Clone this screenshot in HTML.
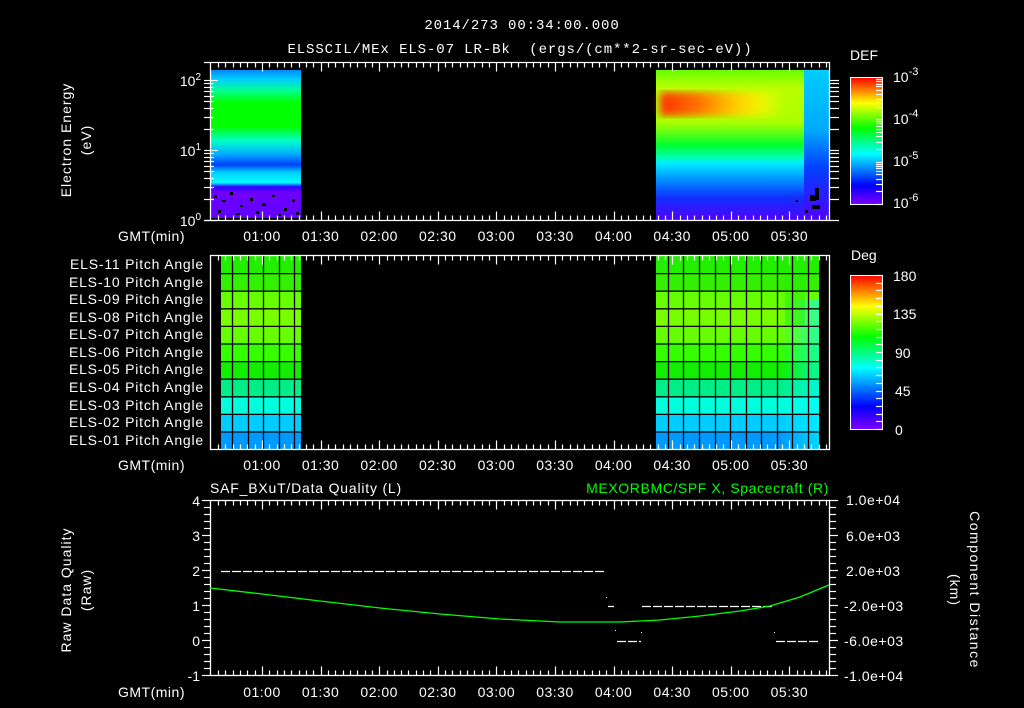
<!DOCTYPE html>
<html><head><meta charset="utf-8"><style>
html,body{margin:0;padding:0;background:#000;width:1024px;height:708px;overflow:hidden}
svg{display:block}
text{font-family:"Liberation Sans",sans-serif;fill:#fff;font-size:14px}
.mono{font-family:"Liberation Mono",monospace}
</style></head><body>
<svg width="1024" height="708" viewBox="0 0 1024 708" xmlns="http://www.w3.org/2000/svg">
<defs>
<linearGradient id="rb" x1="0" y1="1" x2="0" y2="0">
<stop offset="0" stop-color="#8000ff"/><stop offset="0.15" stop-color="#0000ff"/>
<stop offset="0.4" stop-color="#00ffff"/><stop offset="0.6" stop-color="#00ff00"/>
<stop offset="0.8" stop-color="#ffff00"/><stop offset="1" stop-color="#ff0000"/>
</linearGradient>
<linearGradient id="lb" x1="0" y1="0" x2="0" y2="1">
<stop offset="0" stop-color="#0088ff"/><stop offset="0.06" stop-color="#00ccff"/>
<stop offset="0.14" stop-color="#00ff90"/><stop offset="0.22" stop-color="#00ff00"/>
<stop offset="0.38" stop-color="#00ff00"/><stop offset="0.48" stop-color="#00ffcc"/>
<stop offset="0.57" stop-color="#00aaff"/><stop offset="0.64" stop-color="#0040ff"/>
<stop offset="0.69" stop-color="#00ccff"/><stop offset="0.76" stop-color="#00ffff"/>
<stop offset="0.79" stop-color="#3000ff"/><stop offset="0.83" stop-color="#7000ff"/>
<stop offset="1" stop-color="#6000ff"/>
</linearGradient>
<linearGradient id="rbk" x1="0" y1="0" x2="0" y2="1">
<stop offset="0" stop-color="#66ff00"/><stop offset="0.12" stop-color="#bbff00"/>
<stop offset="0.35" stop-color="#aaff00"/><stop offset="0.5" stop-color="#00ff30"/>
<stop offset="0.58" stop-color="#00ffaa"/><stop offset="0.62" stop-color="#00eeff"/>
<stop offset="0.72" stop-color="#0099ff"/><stop offset="0.85" stop-color="#1030ff"/>
<stop offset="1" stop-color="#5000ff"/>
</linearGradient>
<linearGradient id="rstrip" x1="0" y1="0" x2="0" y2="1">
<stop offset="0" stop-color="#00ccff"/><stop offset="0.4" stop-color="#00aaff"/>
<stop offset="0.65" stop-color="#0040ff"/><stop offset="1" stop-color="#5000ff"/>
</linearGradient>
<linearGradient id="band" x1="0" y1="0" x2="1" y2="0">
<stop offset="0" stop-color="#ff3000"/><stop offset="0.3" stop-color="#ff7000"/>
<stop offset="0.6" stop-color="#ffcc00"/><stop offset="0.8" stop-color="#ffee00" stop-opacity="0.8"/>
<stop offset="1" stop-color="#ffff00" stop-opacity="0"/>
</linearGradient>
<linearGradient id="fadeR" x1="0" y1="0" x2="1" y2="0">
<stop offset="0" stop-opacity="0" stop-color="#00ffff"/><stop offset="1" stop-color="#00ffff" stop-opacity="0.6"/>
</linearGradient>
<filter id="bl"><feGaussianBlur stdDeviation="4"/></filter>
</defs>

<text class="mono" x="522" y="29" text-anchor="middle" font-size="17" letter-spacing="0.9">2014/273 00:34:00.000</text>
<text class="mono" x="520" y="53" text-anchor="middle" font-size="17" letter-spacing="0.9" xml:space="preserve">ELSSCIL/MEx ELS-07 LR-Bk  (ergs/(cm**2-sr-sec-eV))</text>

<rect x="211" y="70" width="90" height="148" fill="url(#lb)"/>
<g fill="#000">
<rect x="214" y="195" width="3" height="3"/><rect x="222" y="200" width="4" height="2"/><rect x="230" y="192" width="3" height="3"/><rect x="240" y="205" width="3" height="2"/><rect x="250" y="198" width="3" height="3"/><rect x="262" y="203" width="4" height="3"/><rect x="272" y="195" width="3" height="2"/><rect x="284" y="208" width="3" height="3"/><rect x="292" y="199" width="3" height="3"/><rect x="218" y="210" width="3" height="3"/><rect x="236" y="213" width="4" height="2"/><rect x="256" y="211" width="3" height="3"/><rect x="278" y="214" width="3" height="2"/><rect x="296" y="212" width="3" height="3"/>
</g>
<rect x="656" y="70" width="150" height="150" fill="url(#rbk)"/>
<rect x="660" y="92" width="125" height="24" fill="url(#band)" filter="url(#bl)"/>
<rect x="804" y="70" width="25" height="150" fill="url(#rstrip)"/>
<g fill="#000"><rect x="810" y="195" width="6" height="6"/><rect x="815" y="188" width="4" height="12"/><rect x="812" y="205" width="8" height="4"/><rect x="805" y="210" width="3" height="3"/><rect x="796" y="200" width="2" height="2"/></g>

<g stroke="#fff" fill="none" stroke-width="1.3">
<path d="M204 62.5H829.5V220.5H204M210.5 62V221"/>
</g>

<text x="201" y="86" text-anchor="end" font-size="14">10<tspan font-size="10" dy="-6">2</tspan></text>
<text x="201" y="156" text-anchor="end" font-size="14">10<tspan font-size="10" dy="-6">1</tspan></text>
<text x="201" y="226" text-anchor="end" font-size="14">10<tspan font-size="10" dy="-6">0</tspan></text>
<text transform="translate(71,140) rotate(-90)" text-anchor="middle" font-size="17" letter-spacing="1">Electron Energy</text>
<text transform="translate(91,140) rotate(-90)" text-anchor="middle" font-size="17" letter-spacing="1">(eV)</text>

<text x="850" y="60" font-size="17">DEF</text>
<rect x="850.5" y="77.5" width="32" height="127" fill="url(#rb)" stroke="#fff"/>
<g font-size="17"><text x="893" y="82">10<tspan font-size="11" dy="-7">-3</tspan></text>
<text x="893" y="124">10<tspan font-size="11" dy="-7">-4</tspan></text>
<text x="893" y="166">10<tspan font-size="11" dy="-7">-5</tspan></text>
<text x="893" y="208">10<tspan font-size="11" dy="-7">-6</tspan></text></g>

<g id="mid">
<rect x="221" y="256" width="80" height="17.6" fill="#22ee00"/>
<rect x="221" y="273.6" width="80" height="17.6" fill="#33f000"/>
<rect x="221" y="291.2" width="80" height="17.6" fill="#66ff00"/>
<rect x="221" y="308.8" width="80" height="17.6" fill="#77ff00"/>
<rect x="221" y="326.4" width="80" height="17.6" fill="#66ff00"/>
<rect x="221" y="344" width="80" height="17.6" fill="#33ff00"/>
<rect x="221" y="361.6" width="80" height="17.6" fill="#11ee00"/>
<rect x="221" y="379.2" width="80" height="17.6" fill="#00ee88"/>
<rect x="221" y="396.8" width="80" height="17.6" fill="#00ffdd"/>
<rect x="221" y="414.4" width="80" height="17.6" fill="#00ccff"/>
<rect x="221" y="432" width="80" height="17.4" fill="#0099ff"/>
<rect x="656" y="256" width="163" height="17.6" fill="#22ee00"/>
<rect x="656" y="273.6" width="163" height="17.6" fill="#33f000"/>
<rect x="656" y="291.2" width="163" height="17.6" fill="#66ff00"/>
<rect x="656" y="308.8" width="163" height="17.6" fill="#77ff00"/>
<rect x="656" y="326.4" width="163" height="17.6" fill="#66ff00"/>
<rect x="656" y="344" width="163" height="17.6" fill="#33ff00"/>
<rect x="656" y="361.6" width="163" height="17.6" fill="#11ee00"/>
<rect x="656" y="379.2" width="163" height="17.6" fill="#00ee88"/>
<rect x="656" y="396.8" width="163" height="17.6" fill="#00ffdd"/>
<rect x="656" y="414.4" width="163" height="17.6" fill="#00ccff"/>
<rect x="656" y="432" width="163" height="17.4" fill="#0099ff"/>
<rect x="780" y="300" width="39" height="149" fill="url(#fadeR)"/>
<rect x="785" y="256" width="20" height="70" fill="#22ee00" opacity="0.5"/>
</g>
<g stroke="#000" stroke-width="1.3" fill="none">
<path d="M232.5 256V449M248.5 256V449M263.5 256V449M279.5 256V449M294.5 256V449"/>
<path d="M668.5 256V449M683.5 256V449M699.5 256V449M715.5 256V449M730.5 256V449M746.5 256V449M761.5 256V449M777.5 256V449M792.5 256V449M808.5 256V449"/>
<path d="M221 273.6H301M221 291.2H301M221 308.8H301M221 326.4H301M221 344H301M221 361.6H301M221 379.2H301M221 396.8H301M221 414.4H301M221 432H301"/>
<path d="M656 273.6H819M656 291.2H819M656 308.8H819M656 326.4H819M656 344H819M656 361.6H819M656 379.2H819M656 396.8H819M656 414.4H819M656 432H819"/>
</g>
<rect x="210.5" y="255.5" width="619" height="194" fill="none" stroke="#fff" stroke-width="1.3"/>
<g font-size="13" text-anchor="end" letter-spacing="0.8">
<text x="204" y="269">ELS-11 Pitch Angle</text><text x="204" y="287">ELS-10 Pitch Angle</text>
<text x="204" y="304">ELS-09 Pitch Angle</text><text x="204" y="322">ELS-08 Pitch Angle</text>
<text x="204" y="339">ELS-07 Pitch Angle</text><text x="204" y="357">ELS-06 Pitch Angle</text>
<text x="204" y="374">ELS-05 Pitch Angle</text><text x="204" y="392">ELS-04 Pitch Angle</text>
<text x="204" y="410">ELS-03 Pitch Angle</text><text x="204" y="427">ELS-02 Pitch Angle</text>
<text x="204" y="445">ELS-01 Pitch Angle</text></g>

<text x="851" y="260" font-size="17">Deg</text>
<rect x="850.5" y="275.5" width="32" height="154" fill="url(#rb)" stroke="#fff"/>
<g font-size="17"><text x="893" y="281">180</text><text x="893" y="319">135</text><text x="895" y="358">90</text><text x="895" y="396">45</text><text x="895" y="435">0</text></g>

<text x="210" y="493" font-size="16" letter-spacing="0.8">SAF_BXuT/Data Quality (L)</text>
<text x="829" y="493" font-size="16" letter-spacing="0.6" text-anchor="end" style="fill:#00ff00">MEXORBMC/SPF X, Spacecraft (R)</text>
<rect x="210.5" y="500.5" width="619" height="175" fill="none" stroke="#fff" stroke-width="1.3"/>
<g stroke="#fff" stroke-width="1.3" fill="none">
<path d="M221 571.5H605" stroke-dasharray="9 2"/>
<path d="M608 606.5H614M642 606.5H773" stroke-dasharray="9 2"/>
<path d="M617 641.5H641M776 641.5H819" stroke-dasharray="9 2"/>
</g>
<g fill="#fff"><rect x="606" y="597" width="1" height="1"/><rect x="615" y="630" width="1" height="1"/><rect x="641" y="632" width="1" height="1"/><rect x="774" y="632" width="1" height="1"/></g>
<polyline fill="none" stroke="#00ff00" stroke-width="1.3" points="210,588 262,594 320,601 380,608 440,614 500,619 560,622 620,622 660,620 700,616 740,611 770,606 800,597 829,585"/>
<g font-size="14" text-anchor="end"><text x="200" y="506">4</text><text x="200" y="541">3</text><text x="200" y="576">2</text><text x="200" y="611">1</text><text x="200" y="646">0</text><text x="200" y="681">-1</text></g>
<g font-size="13" letter-spacing="0.5"><text x="846" y="505">1.0e+04</text><text x="846" y="541">6.0e+03</text><text x="846" y="576">2.0e+03</text><text x="844" y="611">-2.0e+03</text><text x="844" y="646">-6.0e+03</text><text x="844" y="681">-1.0e+04</text></g>
<text transform="translate(71,590) rotate(-90)" text-anchor="middle" font-size="17" letter-spacing="1">Raw Data Quality</text>
<text transform="translate(91,590) rotate(-90)" text-anchor="middle" font-size="17" letter-spacing="1">(Raw)</text>
<text transform="translate(970,590) rotate(90)" text-anchor="middle" font-size="17" letter-spacing="1.5">Component Distance</text>
<text transform="translate(950,590) rotate(90)" text-anchor="middle" font-size="17" letter-spacing="1">(km)</text>

<g id="ticks" stroke="#fff" stroke-width="1.2"></g>
<g id="labels" font-size="14" text-anchor="middle" letter-spacing="0.5"></g>
</svg>
<script>
(function(){
var ns="http://www.w3.org/2000/svg",t=document.getElementById("ticks"),L=document.getElementById("labels");
function ln(x1,y1,x2,y2){var l=document.createElementNS(ns,"line");l.setAttribute("x1",x1);l.setAttribute("y1",y1);l.setAttribute("x2",x2);l.setAttribute("y2",y2);t.appendChild(l);}
function tx(x,y,s){var e=document.createElementNS(ns,"text");e.setAttribute("x",x);e.setAttribute("y",y);e.textContent=s;L.appendChild(e);}
var panels=[[62.5,220.5,241],[255.5,449.5,470],[500.5,675.5,697]];
var step=58.6/8;
panels.forEach(function(p){
 for(var x=262-step*7;x<830;x+=step){var m=Math.abs(((x-262)/58.6)-Math.round((x-262)/58.6))<0.01;var len=m?9:5;if(x<211)continue;var xx=Math.round(x)+0.5;ln(xx,p[0],xx,p[0]+len);ln(xx,p[1],xx,p[1]-len);}
 var labs=["01:00","01:30","02:00","02:30","03:00","03:30","04:00","04:30","05:00","05:30"];
 labs.forEach(function(s,i){tx(262+58.6*i,p[2],s);});
 var g=document.createElementNS(ns,"text");g.setAttribute("x",118);g.setAttribute("y",p[2]);g.setAttribute("text-anchor","start");g.textContent="GMT(min)";L.appendChild(g);
});
for(var d=0;d<3;d++){for(var k=1;k<10;k++){var y=220-70*(d+Math.log10(k));if(y<62)break;var len=k==1?8:4;y=Math.round(y)+0.5;ln(204,y,210+len,y);ln(829,y,839,y);}}
for(var i=0;i<=25;i++){var y=500.5+i*7;var m=i%5==0;ln(m?202:204,y,210,y);ln(829,y,m?838:836,y);}
for(var d=0;d<3;d++){for(var k=1;k<10;k++){var y=204-42.3*(d+Math.log10(k));y=Math.round(y)+0.5;ln(876,y,882,y);}}
for(var i=0;i<=20;i++){var y=Math.round(429-i*7.7)+0.5;ln(876,y,882,y);}
})();
</script>
</body></html>
